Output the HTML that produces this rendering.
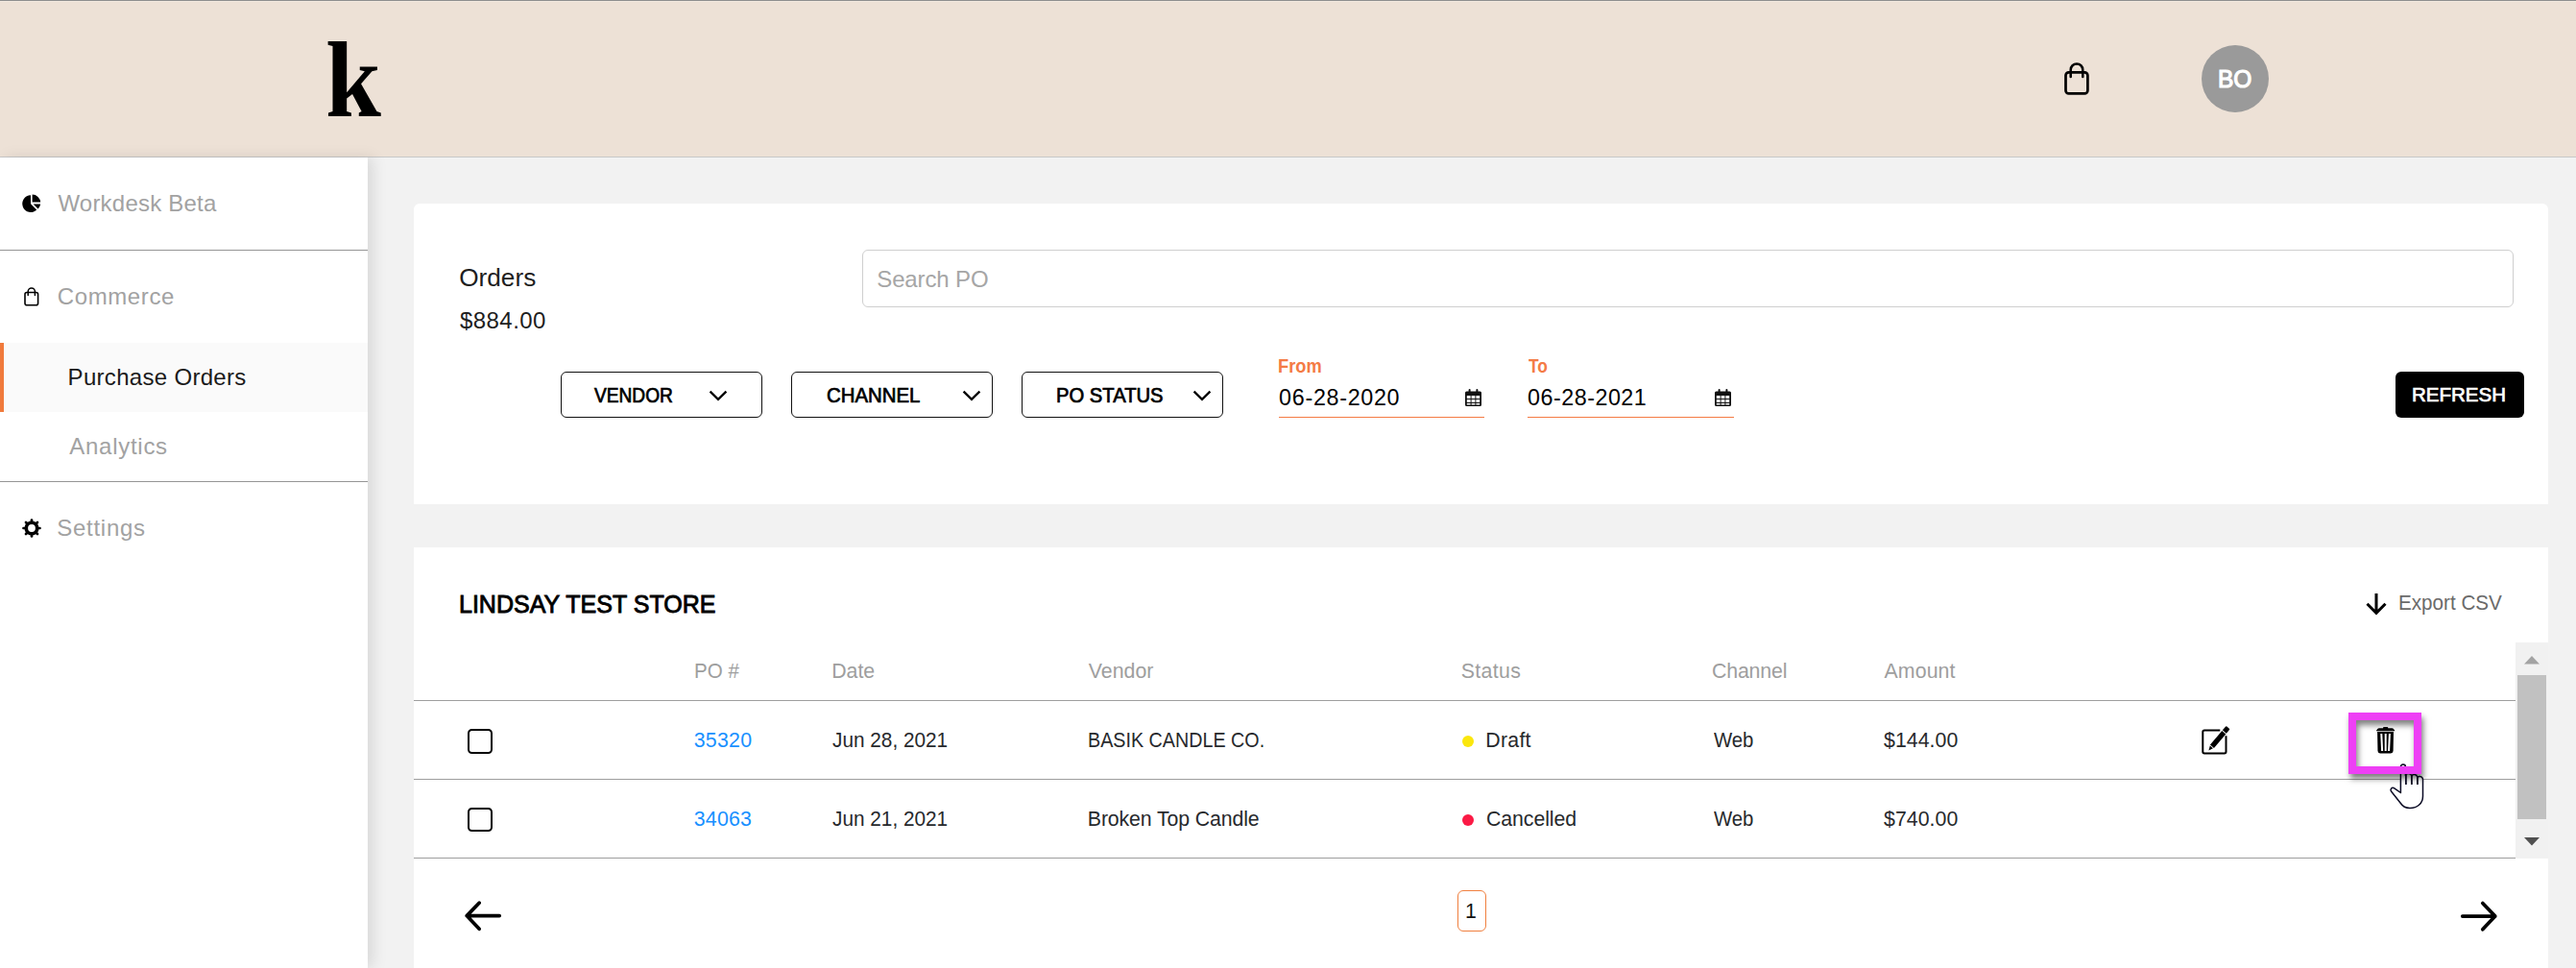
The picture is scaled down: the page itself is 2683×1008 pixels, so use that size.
<!DOCTYPE html>
<html lang="en">
<head>
<meta charset="utf-8">
<title>Purchase Orders</title>
<style>
*{box-sizing:border-box;margin:0;padding:0}
html,body{width:2683px;height:1008px;overflow:hidden;background:#f2f2f2}
body{position:relative;font-family:"Liberation Sans",Arial,sans-serif;color:#212121}
.abs{position:absolute}
.t{position:absolute;white-space:nowrap;line-height:1;transform-origin:0 50%;font-weight:normal;text-decoration:none;display:block}
/* header */
#hdr{left:0;top:0;width:2683px;height:164px;background:#ede1d6;border-top:1px solid #8e8e8e;border-bottom:1px solid #c8c8c8;box-shadow:inset 0 1px 0 0 #f3e9df}
#logo{left:339px;top:27px;font-family:"Liberation Serif","DejaVu Serif",serif;font-weight:bold;font-size:112px;line-height:1;color:#000;transform:scaleX(.93)}
#avatar{left:2292.7px;top:46.6px;width:70.6px;height:70.6px;border-radius:50%;background:#9a9a9a}
/* sidebar */
#side{left:0;top:164px;width:383px;height:844px;background:#fff;box-shadow:6px 0 14px rgba(0,0,0,.10)}
.hr{position:absolute;left:0;width:383px;height:1px;background:#959595}
#active{left:0;top:357px;width:383px;height:72px;background:#fafafa;border-left:4px solid #f07a3c}
/* cards */
.card{background:#fff;border-radius:6px}
#card1{left:431px;top:212px;width:2223px;height:313px;border-radius:6px 6px 0 0}
#card2{left:431px;top:570px;width:2223px;height:460px;border-radius:0}
#search{left:898px;top:260px;width:1720px;height:60px;border:1.5px solid #cfcfcf;border-radius:6px;background:#fff}
.btn{position:absolute;top:387px;width:210px;height:48px;border:1.5px solid #111;border-radius:6px;background:#fff}
.ul{position:absolute;height:1.4px;background:#f47b45;top:433.6px}
#refresh{left:2495px;top:387px;width:134px;height:48px;background:#000;border-radius:6px}
.rowline{position:absolute;left:431px;width:2189px;height:1px;background:#9e9e9e}
.cb{position:absolute;left:487.3px;width:25.3px;height:25.3px;border:2.2px solid #000;border-radius:4.5px;background:#fff}
.dot{position:absolute;width:12.4px;height:12.4px;border-radius:50%;left:1522.9px}
svg{position:absolute;overflow:visible}
</style>
</head>
<body>
<header>
<div id="hdr" class="abs"></div>
<div id="logo" class="t">k</div>
<svg style="left:2150px;top:64px" width="28" height="36" viewBox="0 0 28 36"><rect x="1.5" y="11.3" width="22.9" height="22.1" rx="3.2" fill="none" stroke="#000" stroke-width="2.7"/><path d="M6.7 16.1 V8.7 a6.3 6.3 0 0 1 12.6 0 V16.1" fill="none" stroke="#000" stroke-width="2.5" stroke-linecap="round"/></svg>
<div id="avatar" class="abs"></div>
<div class="t" id="bo" style="left:2310.36px;top:70px;font-size:24.9px;color:#fff;-webkit-text-stroke:1.12px #fff;transform:scaleX(0.9831)">BO</div>
</header>

<nav>
<div id="side" class="abs"></div>
<div id="active" class="abs"></div>
<div class="hr" style="top:260px"></div>
<div class="hr" style="top:501px"></div>
<svg style="left:23px;top:202px" width="20" height="20" viewBox="0 0 20 20"><path d="M9 1.2 A8.9 8.9 0 1 0 15.2 16.6 L9 10.2 Z" fill="#000"/><path d="M10.6 0.6 A8.6 8.6 0 0 1 19.2 8.6 H10.6 Z" fill="#000"/><path d="M11.6 10.4 H19.2 A8.8 8.8 0 0 1 16.6 15.4 Z" fill="#000"/></svg>
<svg style="left:25px;top:299px" width="16" height="20" viewBox="0 0 16 20"><rect x="1" y="5.5" width="13.6" height="13.3" rx="2" fill="none" stroke="#000" stroke-width="1.6"/><path d="M4.2 8.5 V4.6 a3.6 3.6 0 0 1 7.2 0 V8.5" fill="none" stroke="#000" stroke-width="1.5" stroke-linecap="round"/></svg>
<svg style="left:23px;top:540px" width="20" height="20" viewBox="-10 -10 20 20"><circle cx="0" cy="0" r="5.750" fill="none" stroke="#000" stroke-width="3.700"/><g stroke="#000" stroke-width="2.700" stroke-linecap="round"><line x1="0" y1="-7" x2="0" y2="-8.500" transform="rotate(0)"/><line x1="0" y1="-7" x2="0" y2="-8.500" transform="rotate(45)"/><line x1="0" y1="-7" x2="0" y2="-8.500" transform="rotate(90)"/><line x1="0" y1="-7" x2="0" y2="-8.500" transform="rotate(135)"/><line x1="0" y1="-7" x2="0" y2="-8.500" transform="rotate(180)"/><line x1="0" y1="-7" x2="0" y2="-8.500" transform="rotate(225)"/><line x1="0" y1="-7" x2="0" y2="-8.500" transform="rotate(270)"/><line x1="0" y1="-7" x2="0" y2="-8.500" transform="rotate(315)"/></g></svg>

<a class="t" id="wb" style="left:60.43px;top:200px;font-size:24px;color:#a2a2a2;letter-spacing:0.21px">Workdesk Beta</a>
<a class="t" id="cm" style="left:59.77px;top:297px;font-size:24px;color:#a2a2a2;letter-spacing:0.61px">Commerce</a>
<a class="t" id="po" style="left:70.57px;top:381px;font-size:24px;color:#1b1b1b;letter-spacing:0.31px">Purchase Orders</a>
<a class="t" id="an" style="left:72.24px;top:453px;font-size:24px;color:#a2a2a2;letter-spacing:0.73px">Analytics</a>
<a class="t" id="st" style="left:59.33px;top:538px;font-size:24px;color:#a2a2a2;letter-spacing:0.71px">Settings</a>
</nav>

<main>
<section>
<div id="card1" class="abs card"></div>
<div id="search" class="abs"></div>
<div class="btn" style="left:584px"><svg style="left:153px;top:17.5px" width="20" height="13" viewBox="0 0 20 13"><path d="M1.6 1.6 L10 9.8 L18.400 1.600" fill="none" stroke="#000" stroke-width="2.4"/></svg></div>
<div class="btn" style="left:824px"><svg style="left:177px;top:17.5px" width="20" height="13" viewBox="0 0 20 13"><path d="M1.6 1.6 L10 9.8 L18.400 1.600" fill="none" stroke="#000" stroke-width="2.4"/></svg></div>
<div class="btn" style="left:1064px"><svg style="left:177px;top:17.5px" width="20" height="13" viewBox="0 0 20 13"><path d="M1.6 1.6 L10 9.8 L18.400 1.600" fill="none" stroke="#000" stroke-width="2.4"/></svg></div>
<div class="ul" style="left:1332px;width:214px"></div>
<div class="ul" style="left:1591px;width:215px"></div>
<svg style="left:1526px;top:405px" width="17" height="18" viewBox="0 0 17 18"><path fill="#111" d="M1.500 2.500 h14 a1.500 1.500 0 0 1 1.500 1.500 v12.500 a1.500 1.500 0 0 1 -1.500 1.500 h-14 a1.500 1.500 0 0 1 -1.500 -1.500 v-12.500 a1.500 1.500 0 0 1 1.500 -1.500 z M1.800 7 v3 h3.800 v-3 z M6.600 7 v3 h3.800 v-3 z M11.400 7 v3 h3.800 v-3 z M1.800 11 v3 h3.800 v-3 z M6.600 11 v3 h3.800 v-3 z M11.400 11 v3 h3.800 v-3 z M1.800 15 v1.500 h3.800 v-1.500 z M6.600 15 v1.500 h3.800 v-1.500 z M11.400 15 v1.500 h3.800 v-1.500 z" fill-rule="evenodd"/><rect x="3.600" y="0" width="2" height="4.500" rx="1" fill="#111"/><rect x="11.400" y="0" width="2" height="4.500" rx="1" fill="#111"/></svg>
<svg style="left:1786px;top:405px" width="17" height="18" viewBox="0 0 17 18"><path fill="#111" d="M1.500 2.500 h14 a1.500 1.500 0 0 1 1.500 1.500 v12.500 a1.500 1.500 0 0 1 -1.500 1.500 h-14 a1.500 1.500 0 0 1 -1.500 -1.500 v-12.500 a1.500 1.500 0 0 1 1.500 -1.500 z M1.800 7 v3 h3.800 v-3 z M6.600 7 v3 h3.800 v-3 z M11.400 7 v3 h3.800 v-3 z M1.800 11 v3 h3.800 v-3 z M6.600 11 v3 h3.800 v-3 z M11.400 11 v3 h3.800 v-3 z M1.800 15 v1.500 h3.800 v-1.500 z M6.600 15 v1.500 h3.800 v-1.500 z M11.400 15 v1.500 h3.800 v-1.500 z" fill-rule="evenodd"/><rect x="3.600" y="0" width="2" height="4.500" rx="1" fill="#111"/><rect x="11.400" y="0" width="2" height="4.500" rx="1" fill="#111"/></svg>
<div id="refresh" class="abs"></div>
<h2 class="t" id="or" style="left:478.15px;top:276px;font-size:26.2px;color:#1e1e1e;letter-spacing:0.02px">Orders</h2>
<div class="t" id="am" style="left:478.94px;top:322px;font-size:24px;color:#1e1e1e;letter-spacing:0.46px">$884.00</div>
<div class="t" id="sp" style="left:913.26px;top:279px;font-size:24px;color:#a6a6a6;letter-spacing:-0.13px">Search PO</div>
<div class="t" id="vn" style="left:618.53px;top:402px;font-size:21.5px;color:#000;-webkit-text-stroke:0.73px #000;transform:scaleX(0.8900)">VENDOR</div>
<div class="t" id="ch" style="left:861.12px;top:402px;font-size:21.5px;color:#000;-webkit-text-stroke:0.73px #000;transform:scaleX(0.9469)">CHANNEL</div>
<div class="t" id="ps" style="left:1099.77px;top:402px;font-size:21.5px;color:#000;-webkit-text-stroke:0.73px #000;transform:scaleX(0.9402)">PO STATUS</div>
<label class="t" id="fr" style="left:1331.39px;top:372px;font-size:19.3px;color:#f47b45;font-weight:bold;transform:scaleX(0.9470)">From</label>
<label class="t" id="to" style="left:1591.61px;top:372px;font-size:19.3px;color:#f47b45;font-weight:bold;transform:scaleX(0.9002)">To</label>
<div class="t" id="d1" style="left:1332.12px;top:403px;font-size:23.3px;color:#000;letter-spacing:0.70px">06-28-2020</div>
<div class="t" id="d2" style="left:1591.12px;top:403px;font-size:23.3px;color:#000;letter-spacing:0.50px">06-28-2021</div>
<div class="t" id="rf" style="left:2511.56px;top:400px;font-size:21.1px;color:#fff;-webkit-text-stroke:0.72px #fff;transform:scaleX(0.9724)">REFRESH</div>
</section>

<section>
<div id="card2" class="abs card"></div>
<svg style="left:2464px;top:618px" width="22" height="23" viewBox="0 0 22 23"><path d="M11 0.100 V20.500 M1.500 10.800 L11 20.300 L20.500 10.800" fill="none" stroke="#000" stroke-width="3"/></svg>

<div class="rowline" style="top:729px"></div>
<div class="rowline" style="top:811px"></div>
<div class="rowline" style="top:893px"></div>

<div class="cb" style="top:759.3px"></div>
<div class="dot" style="top:765.8px;background:#fbe70d"></div>
<div class="cb" style="top:841.1px"></div>
<div class="dot" style="top:847.8px;background:#fb1a45"></div>

<!-- edit icon -->
<svg style="left:2293px;top:756px" width="30" height="30" viewBox="0 0 30 30"><path d="M19.300 4.600 H3 Q1.300 4.600 1.300 6.300 V26.800 Q1.300 28.500 3 28.500 H23.800 Q25.500 28.500 25.500 26.800 V10.200" fill="none" stroke="#000" stroke-width="2"/><path d="M7.40 25.40 L11.96 23.24 L8.79 20.55 Z M12.94 22.89 L25.24 8.40 L21.27 5.04 L8.98 19.52 Z M25.82 7.72 L28.94 4.04 Q29.58 3.28 28.82 2.64 L26.38 0.56 Q25.62 -0.08 24.97 0.68 L21.85 4.35 Z" fill="#000"/></svg>

<!-- hand cursor (sits under the highlight box) -->
<svg style="left:2489px;top:795px" width="36" height="48" viewBox="0 0 36 48"><path d="M11.400 30.500 V3.500 a2.500 2.500 0 0 1 5 0 V12.500 c1 -2.600 5.500 -2.600 6.500 0.500 c1 -2.300 5.200 -2 6 1.500 c1.200 -1.800 5.600 -1.300 5.600 2.500 V34 c0 7.500 -5.500 12.500 -13.500 12.500 c-5 0 -8 -2.500 -10 -5.500 L1.500 29 c-1.500 -2.200 0.800 -4.800 3.300 -3.200 Z" fill="#fff" stroke="#0b0b25" stroke-width="1.500" stroke-linejoin="round"/><path d="M16.900 12 V22 M22.900 13 V22 M28.900 14.500 V22" fill="none" stroke="#0b0b25" stroke-width="1.800"/></svg>

<!-- highlight + trash -->
<div class="abs" style="left:2446px;top:742px;width:76px;height:63.600px;border:8px solid #ee3ff5;box-shadow:2px 5px 6px rgba(0,0,0,.5), inset 2px 5px 6px rgba(0,0,0,.5)"></div>
<svg style="left:2475px;top:757px" width="20" height="28" viewBox="0 0 20 28"><rect x="7" y="0" width="5.300" height="2.500" rx="1" fill="#000"/><path d="M0 4.200 Q0 3.600 0.600 3 L1.600 1.700 Q2 1.200 2.800 1.200 H16.500 Q17.300 1.200 17.700 1.700 L18.700 3 Q19.300 3.600 19.300 4.200 Z" fill="#000"/><path d="M1.100 5.100 H18 L17.600 25 Q17.500 27.400 15 27.400 H4 Q1.600 27.400 1.500 25 Z M4.300 7.100 L5.100 24.900 H7.100 L6.300 7.100 Z M8.700 7.100 V24.900 H10.700 V7.100 Z M12.900 7.100 L12.100 24.900 H14.100 L14.900 7.100 Z" fill="#000" fill-rule="evenodd"/></svg>

<!-- scrollbar -->
<div class="abs" style="left:2620.300px;top:669px;width:33.700px;height:225px;background:#f1f1f1"></div>
<div class="abs" style="left:2622.300px;top:703px;width:29.700px;height:149.600px;background:#c1c1c1"></div>
<svg style="left:2629px;top:682.700px" width="16" height="9" viewBox="0 0 16 9"><path d="M0 8.400 L8 0 L16 8.400 Z" fill="#a3a3a3"/></svg>
<svg style="left:2629px;top:871.500px" width="16" height="9" viewBox="0 0 16 9"><path d="M0 0 L8 8.400 L16 0 Z" fill="#505050"/></svg>

<!-- pagination -->
<svg style="left:480px;top:936px" width="44" height="36" viewBox="0 0 44 36"><path d="M40.200 17.600 H6.200 M19.100 4.200 L6.200 17.600 L19.100 31.300" fill="none" stroke="#000" stroke-width="3.700" stroke-linecap="round" stroke-linejoin="round"/></svg>
<svg style="left:2560px;top:936px" width="44" height="36" viewBox="0 0 44 36"><path d="M4.750 18.100 H38.800 M25.800 4.500 L38.800 18.100 L25.800 31.800" fill="none" stroke="#000" stroke-width="3.700" stroke-linecap="round" stroke-linejoin="round"/></svg>
<div class="abs" style="left:1517.900px;top:926.900px;width:30.100px;height:42.800px;border:1.400px solid #f0803f;border-radius:6px;background:#fff"></div>

<h2 class="t" id="ti" style="left:477.59px;top:617px;font-size:25.8px;color:#000;-webkit-text-stroke:0.88px #000;transform:scaleX(0.9702)">LINDSAY TEST STORE</h2>
<div class="t" id="ex" style="left:2497.69px;top:617px;font-size:21.8px;color:#6a6a6a;transform:scaleX(0.9469)">Export CSV</div>
<div class="t" id="h1" style="left:722.80px;top:689px;font-size:21.3px;color:#9e9e9e;transform:scaleX(0.9647)">PO #</div>
<div class="t" id="h2" style="left:866.18px;top:689px;font-size:21.3px;color:#9e9e9e">Date</div>
<div class="t" id="h3" style="left:1133.81px;top:689px;font-size:21.3px;color:#9e9e9e;letter-spacing:0.02px">Vendor</div>
<div class="t" id="h4" style="left:1521.84px;top:689px;font-size:21.3px;color:#9e9e9e;letter-spacing:0.32px">Status</div>
<div class="t" id="h5" style="left:1783.04px;top:689px;font-size:21.3px;color:#9e9e9e;letter-spacing:-0.16px">Channel</div>
<div class="t" id="h6" style="left:1962.52px;top:689px;font-size:21.3px;color:#9e9e9e;letter-spacing:0.11px">Amount</div>
<a class="t" id="a1" style="left:722.69px;top:761px;font-size:21.3px;color:#1890ff;letter-spacing:0.28px">35320</a>
<div class="t" id="a2" style="left:867.18px;top:761px;font-size:21.3px;color:#27292c;transform:scaleX(0.9758)">Jun 28, 2021</div>
<div class="t" id="a3" style="left:1133.37px;top:761px;font-size:21.3px;color:#27292c;transform:scaleX(0.9262)">BASIK CANDLE CO.</div>
<div class="t" id="a4" style="left:1547.32px;top:761px;font-size:21.3px;color:#27292c;letter-spacing:0.26px">Draft</div>
<div class="t" id="a5" style="left:1784.54px;top:761px;font-size:21.3px;color:#27292c;transform:scaleX(0.9543)">Web</div>
<div class="t" id="a6" style="left:1962.12px;top:761px;font-size:21.3px;color:#27292c;letter-spacing:0.03px">$144.00</div>
<a class="t" id="b1" style="left:722.69px;top:843px;font-size:21.3px;color:#1890ff;letter-spacing:0.26px">34063</a>
<div class="t" id="b2" style="left:867.18px;top:843px;font-size:21.3px;color:#27292c;transform:scaleX(0.9758)">Jun 21, 2021</div>
<div class="t" id="b3" style="left:1132.81px;top:843px;font-size:21.3px;color:#27292c;letter-spacing:-0.12px">Broken Top Candle</div>
<div class="t" id="b4" style="left:1548.02px;top:843px;font-size:21.3px;color:#27292c;letter-spacing:-0.08px">Cancelled</div>
<div class="t" id="b5" style="left:1784.54px;top:843px;font-size:21.3px;color:#27292c;transform:scaleX(0.9543)">Web</div>
<div class="t" id="b6" style="left:1962.12px;top:843px;font-size:21.3px;color:#27292c;letter-spacing:0.03px">$740.00</div>
<div class="t" id="pg" style="left:1526.02px;top:939px;font-size:21.3px;color:#111">1</div>
</section>
</main>
</body>
</html>
